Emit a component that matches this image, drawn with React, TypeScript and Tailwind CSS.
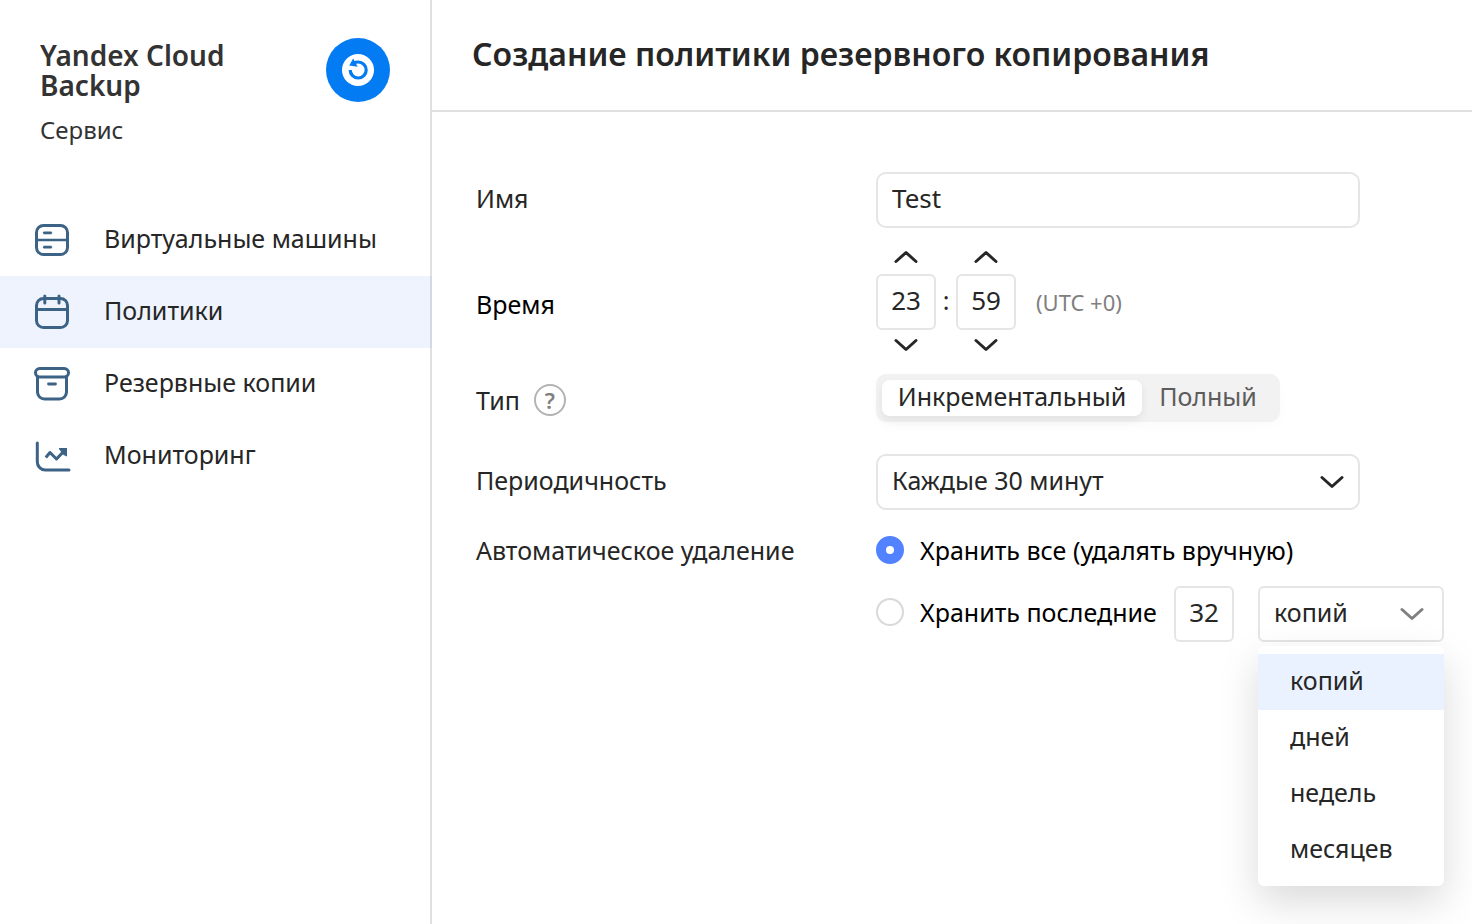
import React, { useState } from 'react';

interface IconProps {
  className?: string;
}

const ServerIcon = () => (
  <svg width="40" height="40" viewBox="0 0 40 40" fill="none" stroke="currentColor" strokeWidth="3" strokeLinecap="round">
    <rect x="4.5" y="5.5" width="31" height="29" rx="7" />
    <path d="M5 20h30" strokeWidth="2.5" />
    <path d="M11.500 12.800h8M11.500 27.200h8" strokeWidth="2.800" strokeLinecap="butt" />
    <path d="M11.500 12.800h8M11.500 27.200h8" strokeWidth="1.500" />
  </svg>
);

const CalendarIcon = () => (
  <svg width="40" height="40" viewBox="0 0 40 40" fill="none" stroke="currentColor" strokeWidth="3" strokeLinecap="round">
    <rect x="4.500" y="6.500" width="31" height="29" rx="7" />
    <path d="M5 17.500h30" />
    <path d="M12.800 4v7M27 4v7" />
  </svg>
);

const ArchiveIcon = () => (
  <svg width="40" height="40" viewBox="0 0 40 40" fill="none" stroke="currentColor" strokeWidth="3" strokeLinecap="round">
    <rect x="3.500" y="4.500" width="33" height="8.500" rx="4.200" />
    <path d="M5.500 13.500V28a7 7 0 0 0 7 7h15a7 7 0 0 0 7-7V13.500" />
    <path d="M16.500 20h7" strokeWidth="2.800" />
  </svg>
);

const ChartIcon = () => (
  <svg width="40" height="40" viewBox="0 0 40 40" fill="none" stroke="currentColor" strokeWidth="3" strokeLinecap="round">
    <path d="M5.300 7v19a8 8 0 0 0 8 8H37" />
    <path d="M13.800 21.500l4.200-5 6.500 6.500 8-8.500" strokeLinecap="butt" strokeLinejoin="round" />
    <path d="M27 12h8v8.500l-3.500-1.500-4.500-6z" fill="currentColor" stroke="none" />
  </svg>
);

const BackupLogo = () => (
  <svg className="shrink-0" width="64" height="64" viewBox="0 0 64 64" fill="none">
    <circle cx="32" cy="32" r="32" fill="#027bf3" />
    <circle cx="32" cy="32" r="16" fill="#fff" />
    <path d="M24.200 32a8 8 0 1 0 8-8c-1.500 0-3 .4-4.200 1.200" stroke="#027bf3" strokeWidth="3.200" />
    <path d="M27.200 20.500l4.500 8.300-8.500-1.400z" fill="#027bf3" />
  </svg>
);

const ChevronDown: React.FC<IconProps> = ({ className }) => (
  <svg className={className} width="24" height="14" viewBox="0 0 24 14" fill="none" stroke="currentColor" strokeWidth="3" strokeLinecap="round" strokeLinejoin="round">
    <path d="M2 2.500l10 9 10-9" />
  </svg>
);

const ChevronUp: React.FC<IconProps> = ({ className }) => (
  <svg className={className} width="24" height="14" viewBox="0 0 24 14" fill="none" stroke="currentColor" strokeWidth="3" strokeLinecap="round" strokeLinejoin="round">
    <path d="M2 11.500l10-9 10 9" />
  </svg>
);

const navItems = [
  { label: 'Виртуальные машины', icon: ServerIcon },
  { label: 'Политики', icon: CalendarIcon },
  { label: 'Резервные копии', icon: ArchiveIcon },
  { label: 'Мониторинг', icon: ChartIcon },
];

const units = ['копий', 'дней', 'недель', 'месяцев'];

interface TimeFieldProps {
  label: string;
  value: number;
  max: number;
  onChange: (value: number) => void;
}

const TimeField: React.FC<TimeFieldProps> = ({ label, value, max, onChange }) => (
  <div className="flex flex-col items-center">
    <button type="button" aria-label={`${label}: больше`} onClick={() => onChange((value + 1) % (max + 1))} className="flex h-7 w-15 items-start justify-center pt-1">
      <ChevronUp />
    </button>
    <input
      type="text"
      aria-label={label}
      value={value}
      onChange={(e) => onChange(Math.min(max, Number(e.target.value) || 0))}
      className="h-14 w-15 rounded-md border-2 border-[#e5e5e5] pb-1 text-center text-[26px]"
    />
    <button type="button" aria-label={`${label}: меньше`} onClick={() => onChange((value + max) % (max + 1))} className="flex h-7 w-15 items-end justify-center pb-1.5">
      <ChevronDown />
    </button>
  </div>
);

const Sidebar = () => (
  <aside className="w-[432px] shrink-0 border-r-2 border-[#e0e0e0]">
    <div className="flex items-start justify-between pt-[38px] pr-10 pl-10">
      <div>
        <h2 className="w-52 pt-0.5 text-[28px] leading-[30px] font-semibold text-[#333]">Yandex Cloud Backup</h2>
        <p className="mt-3.5 text-2xl leading-8 text-[#333]">Сервис</p>
      </div>
      <BackupLogo />
    </div>
    <nav className="mt-[58px]">
      {navItems.map(({ label, icon: Icon }) => (
        <a
          key={label}
          href="#"
          className={`flex h-18 items-center gap-8 pl-8 ${label === 'Политики' ? '-mr-0.5 border-r-2 border-[#d3d8e4] bg-[#eef3fe]' : ''}`}
        >
          <span className="text-[#3c6285]">
            <Icon />
          </span>
          <span className="pb-1">{label}</span>
        </a>
      ))}
    </nav>
  </aside>
);

export default function App() {
  const [name, setName] = useState('Test');
  const [hours, setHours] = useState(23);
  const [minutes, setMinutes] = useState(59);
  const [type, setType] = useState('inc');
  const [keep, setKeep] = useState('all');
  const [count, setCount] = useState('32');
  const [unit, setUnit] = useState('копий');

  const radio =
    'size-7 shrink-0 appearance-none rounded-full border-2 border-[#d9d9d9] bg-white checked:border-10 checked:border-[#5282ff]';

  return (
    <div className="flex min-h-screen bg-white font-['Noto_Sans',sans-serif] text-[25px] leading-9 text-[#262626]">
      <Sidebar />
      <main className="min-w-0 flex-1">
        <header className="flex h-28 items-center border-b-2 border-[#e0e0e0] pb-0.5 pl-10">
          <h1 className="text-[32px] leading-10 font-semibold">Создание политики резервного копирования</h1>
        </header>

        <form className="pt-15 pr-7 pl-11">
          <div className="flex items-center">
            <label htmlFor="name" className="w-100 shrink-0 pb-1">Имя</label>
            <input
              id="name"
              type="text"
              value={name}
              onChange={(e) => setName(e.target.value)}
              className="h-14 w-full max-w-[484px] rounded-[10px] border-2 border-[#e5e5e5] px-3.5 pb-1 text-[26px]"
            />
          </div>

          <div className="mt-[18px] flex items-center">
            <span className="w-100 shrink-0 pt-1 text-black">Время</span>
            <TimeField label="Часы" value={hours} max={23} onChange={setHours} />
            <span className="w-5 pb-1 text-center">:</span>
            <TimeField label="Минуты" value={minutes} max={59} onChange={setMinutes} />
            <span className="ml-5 text-[22px] text-[#808080]">(UTC +0)</span>
          </div>

          <div className="mt-4 flex items-center">
            <div className="flex w-100 shrink-0 items-center gap-3.5 pt-1">
              <span>Тип</span>
              <button
                type="button"
                aria-label="Справка"
                className="flex size-8 items-center justify-center rounded-full border-2 border-[#b3b3b3] text-[22px] leading-7 font-semibold text-[#808080]"
              >
                ?
              </button>
            </div>
            <div className="flex h-12 items-center rounded-[10px] bg-[#f2f2f2] px-1.5 shadow-[0_4px_12px_rgba(0,0,0,0.02)]">
              <button
                type="button"
                aria-pressed={type === 'inc'}
                onClick={() => setType('inc')}
                className={`h-9 w-65 rounded-lg pb-1 text-center leading-8 ${type === 'inc' ? 'bg-white shadow-[0_4px_10px_rgba(0,0,0,0.07)]' : 'text-[#5c5c5c]'}`}
              >
                Инкрементальный
              </button>
              <button
                type="button"
                aria-pressed={type === 'full'}
                onClick={() => setType('full')}
                className={`h-9 w-33 rounded-lg pb-1 text-center leading-8 ${type === 'full' ? 'bg-white shadow-[0_4px_10px_rgba(0,0,0,0.07)]' : 'text-[#5c5c5c]'}`}
              >
                Полный
              </button>
            </div>
          </div>

          <div className="mt-8 flex items-center">
            <label htmlFor="period" className="w-100 shrink-0 pb-1">Периодичность</label>
            <div className="relative w-full max-w-[484px]">
              <select id="period" className="h-14 w-full appearance-none rounded-[10px] border-2 border-[#e5e5e5] bg-white px-3.5 pb-1">
                <option>Каждые 30 минут</option>
              </select>
              <ChevronDown className="pointer-events-none absolute top-[21px] right-4" />
            </div>
          </div>

          <fieldset className="mt-5 flex items-start">
            <div className="w-100 shrink-0 pt-0.5">Автоматическое удаление</div>
            <div className="text-black">
              <label className="flex h-10 items-center gap-4">
                <input type="radio" name="keep" checked={keep === 'all'} onChange={() => setKeep('all')} className={radio} />
                <span>Хранить все (удалять вручную)</span>
              </label>
              <div className="mt-4 flex items-center">
                <label className="flex items-center gap-4 pb-1">
                  <input type="radio" name="keep" checked={keep === 'last'} onChange={() => setKeep('last')} className={radio} />
                  <span className="w-[238px] whitespace-nowrap">Хранить последние</span>
                </label>
                <input
                  type="text"
                  aria-label="Количество"
                  value={count}
                  onChange={(e) => setCount(e.target.value)}
                  className="ml-4 h-14 w-15 rounded-md border-2 border-[#e5e5e5] pb-1 text-center text-[26px] text-[#262626]"
                />
                <div className="relative ml-6 w-[186px] text-[#262626]">
                  <select
                    aria-label="Единица"
                    value={unit}
                    onChange={(e) => setUnit(e.target.value)}
                    className="h-14 w-full appearance-none rounded-md border-2 border-[#e5e5e5] bg-white px-3.5 pb-1"
                  >
                    {units.map((u) => (
                      <option key={u}>{u}</option>
                    ))}
                  </select>
                  <ChevronDown className="pointer-events-none absolute top-[21px] right-5 text-[#808080]" />
                  <ul role="listbox" className="absolute top-15 w-full rounded-md bg-white py-2 shadow-[0_16px_40px_rgba(0,0,0,0.15)]">
                    {units.map((u) => (
                      <li
                        key={u}
                        role="option"
                        aria-selected={u === unit}
                        onClick={() => setUnit(u)}
                        className={`flex h-14 cursor-pointer items-center pb-1 pl-8 ${u === unit ? 'bg-[#ebf2ff]' : ''}`}
                      >
                        {u}
                      </li>
                    ))}
                  </ul>
                </div>
              </div>
            </div>
          </fieldset>
        </form>
      </main>
    </div>
  );
}
